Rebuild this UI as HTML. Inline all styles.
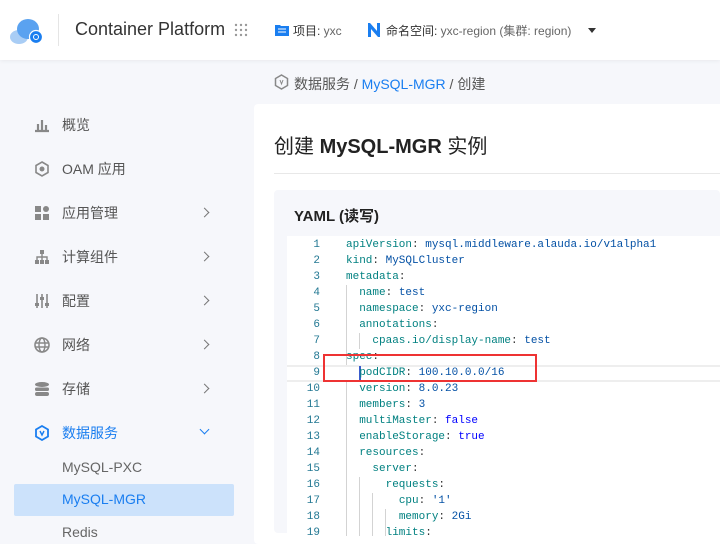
<!DOCTYPE html>
<html><head><meta charset="utf-8"><style>
*{margin:0;padding:0;box-sizing:border-box}
body{width:720px;height:533px;overflow:hidden;background:#f6f7fb;font-family:"Liberation Sans","Noto Sans CJK SC",sans-serif;position:relative;color:#333}
.hdr{position:absolute;left:0;top:0;width:720px;height:60px;background:#fff;box-shadow:0 1px 4px rgba(0,0,0,.06)}
.abs{position:absolute;white-space:nowrap}
.nav{position:absolute;left:34px;font-size:14px;color:#555;display:flex;align-items:center}
.nav svg{margin-right:12px}
.chev{position:absolute;left:201px;width:7px;height:7px;border-right:1.5px solid #777;border-top:1.5px solid #777;transform:rotate(45deg)}
.card{position:absolute;left:254px;top:104px;width:480px;height:440px;background:#fff;border-radius:4px}
.code{position:absolute;left:287px;top:236px;width:440px;height:300px;background:#fff;font-family:"Liberation Mono",monospace;font-size:11px;overflow:hidden}
.ln{position:absolute;left:0;width:33px;text-align:right;color:#237893;line-height:16px}
.tx{position:absolute;left:59px;white-space:pre;line-height:16px}
.k{color:#008080}.v{color:#0451a5}.b{color:#0000ff}
.g{position:absolute;width:1px;background:#d3d3d3}
</style></head><body>
<div class="hdr"></div>
<svg class="abs" style="left:9px;top:17px" width="36" height="28" viewBox="0 0 36 28"><ellipse cx="10" cy="20" rx="9" ry="7" fill="#a9cdf5"/><ellipse cx="19" cy="12" rx="11" ry="10" fill="#5aa2f0"/><circle cx="27" cy="20" r="6.5" fill="#1a7ef0" stroke="#fff" stroke-width="1.2"/><circle cx="27" cy="20" r="2.5" fill="none" stroke="#fff" stroke-width="1"/></svg>
<div class="abs" style="left:58px;top:14px;width:1px;height:32px;background:#e5e5e5"></div>
<div class="abs" style="left:75px;top:19px;font-size:18px;color:#333">Container Platform</div>
<svg class="abs" style="left:234px;top:23px" width="14" height="14"><g fill="#999"><circle cx="2" cy="2" r="1.2"/><circle cx="7" cy="2" r="1.2"/><circle cx="12" cy="2" r="1.2"/><circle cx="2" cy="7" r="1.2"/><circle cx="7" cy="7" r="1.2"/><circle cx="12" cy="7" r="1.2"/><circle cx="2" cy="12" r="1.2"/><circle cx="7" cy="12" r="1.2"/><circle cx="12" cy="12" r="1.2"/></g></svg>
<svg class="abs" style="left:275px;top:23px" width="14" height="13"><path d="M0 2h5l1 1h8v10H0z" fill="#1a7ef0"/><path d="M3 6h8M3 9h8" stroke="#fff"/></svg>
<div class="abs" style="left:293px;top:22px;font-size:12px;color:#333">项目: <span style="color:#666">yxc</span></div>
<svg class="abs" style="left:367px;top:23px" width="14" height="14"><path d="M1 0v14h3V6l7 8h2V0h-3v8L3 0z" fill="#1a7ef0"/></svg>
<div class="abs" style="left:386px;top:22px;font-size:12px;color:#333">命名空间: <span style="color:#666">yxc-region (集群: region)</span></div>
<div class="abs" style="left:588px;top:28px;border-left:4px solid transparent;border-right:4px solid transparent;border-top:5px solid #333"></div>

<div class="nav" style="top:115px"><svg width="16" height="16"><path d="M1 14h14M4 13V7M8 13V3M12 13V8" stroke="#888" stroke-width="2.2"/></svg>概览</div>
<div class="nav" style="top:159px"><svg width="16" height="16"><path d="M8 1l6 3.5v7L8 15l-6-3.5v-7z" fill="none" stroke="#888" stroke-width="1.6"/><circle cx="8" cy="8" r="2.5" fill="#888"/></svg>OAM 应用</div>
<div class="nav" style="top:203px"><svg width="16" height="16"><g fill="#888"><rect x="1" y="1" width="6" height="6"/><rect x="1" y="9" width="6" height="6"/><rect x="9" y="9" width="6" height="6"/><circle cx="12" cy="4" r="3"/></g></svg>应用管理</div><div class="chev" style="top:209px"></div>
<div class="nav" style="top:247px"><svg width="16" height="16"><g fill="#888"><rect x="6" y="1" width="4" height="4"/><rect x="1" y="11" width="4" height="4"/><rect x="6" y="11" width="4" height="4"/><rect x="11" y="11" width="4" height="4"/></g><path d="M8 5v6M3 11V8h10v3" stroke="#888" fill="none" stroke-width="1.4"/></svg>计算组件</div><div class="chev" style="top:253px"></div>
<div class="nav" style="top:291px"><svg width="16" height="16"><path d="M3 1v14M8 1v14M13 1v14" stroke="#888" stroke-width="1.6"/><rect x="1" y="10" width="4" height="3" fill="#888"/><rect x="6" y="4" width="4" height="3" fill="#888"/><rect x="11" y="10" width="4" height="3" fill="#888"/></svg>配置</div><div class="chev" style="top:297px"></div>
<div class="nav" style="top:335px"><svg width="16" height="16"><circle cx="8" cy="8" r="7" fill="none" stroke="#888" stroke-width="1.6"/><ellipse cx="8" cy="8" rx="3" ry="7" fill="none" stroke="#888" stroke-width="1.4"/><path d="M1 6h14M1 10h14" stroke="#888" stroke-width="1.4"/></svg>网络</div><div class="chev" style="top:341px"></div>
<div class="nav" style="top:379px"><svg width="16" height="16"><g fill="#888"><ellipse cx="8" cy="3.5" rx="7" ry="2.5"/><rect x="1" y="6.5" width="14" height="3.5" rx="1.5"/><rect x="1" y="11" width="14" height="4" rx="2"/></g></svg>存储</div><div class="chev" style="top:385px"></div>
<div class="nav" style="top:423px;color:#1a7ef0"><svg width="16" height="16"><path d="M8 1l6 3.5v7L8 15l-6-3.5v-7z" fill="none" stroke="#1a7ef0" stroke-width="1.8"/><path d="M6 6l2 4 2-4" stroke="#1a7ef0" fill="none" stroke-width="1.4"/></svg>数据服务</div>
<div class="abs" style="left:201px;top:426px;width:7px;height:7px;border-right:1.5px solid #1a7ef0;border-bottom:1.5px solid #1a7ef0;transform:rotate(45deg)"></div>
<div class="abs" style="left:62px;top:459px;font-size:14px;color:#666">MySQL-PXC</div>
<div class="abs" style="left:14px;top:484px;width:220px;height:32px;background:#cce2fb;border-radius:2px"></div>
<div class="abs" style="left:62px;top:491px;font-size:14px;color:#1a7ef0">MySQL-MGR</div>
<div class="abs" style="left:62px;top:524px;font-size:14px;color:#666">Redis</div>

<svg class="abs" style="left:274px;top:74px" width="15" height="16"><path d="M7.5 1l6 3.5v7l-6 3.5-6-3.5v-7z" fill="none" stroke="#888" stroke-width="1.5"/><path d="M6 6l1.5 4 1.5-4" stroke="#888" fill="none"/></svg>
<div class="abs" style="left:294px;top:74px;font-size:14px;color:#555">数据服务 / <span style="color:#1a7ef0">MySQL-MGR</span> / 创建</div>
<div class="card"></div>
<div class="abs" style="left:274px;top:130px;font-size:20px;color:#222">创建 <span style="font-weight:600">MySQL-MGR</span> 实例</div>
<div class="abs" style="left:274px;top:173px;width:446px;height:1px;background:#e8e8e8"></div>
<div class="abs" style="left:274px;top:190px;width:446px;height:343px;background:#f6f7fb;border-radius:4px"></div>
<div class="abs" style="left:294px;top:205px;font-size:15px;font-weight:bold;color:#222">YAML (读写)</div>
<div class="code">
<div class="abs" style="left:0;top:129px;width:440px;height:17px;border-top:2px solid #eee;border-bottom:2px solid #eee"></div>
<div class="g" style="left:59px;top:49px;height:80px"></div>
<div class="g" style="left:59px;top:145px;height:160px"></div>
<div class="g" style="left:72px;top:97px;height:16px"></div>
<div class="g" style="left:72px;top:241px;height:64px"></div>
<div class="g" style="left:85px;top:257px;height:48px"></div>
<div class="g" style="left:98px;top:273px;height:32px"></div>
<div class="abs" style="left:72px;top:130px;width:2px;height:14px;background:#3a5ccc"></div>
<div class="ln" style="top:1px">1<br>2<br>3<br>4<br>5<br>6<br>7<br>8<br>9<br>10<br>11<br>12<br>13<br>14<br>15<br>16<br>17<br>18<br>19</div>
<div class="tx" style="top:1px"><span class="k">apiVersion</span>: <span class="v">mysql.middleware.alauda.io/v1alpha1</span>
<span class="k">kind</span>: <span class="v">MySQLCluster</span>
<span class="k">metadata</span>:
  <span class="k">name</span>: <span class="v">test</span>
  <span class="k">namespace</span>: <span class="v">yxc-region</span>
  <span class="k">annotations</span>:
    <span class="k">cpaas.io/display-name</span>: <span class="v">test</span>
<span class="k">spec</span>:
  <span class="k">podCIDR</span>: <span class="v">100.10.0.0/16</span>
  <span class="k">version</span>: <span class="v">8.0.23</span>
  <span class="k">members</span>: <span class="v">3</span>
  <span class="k">multiMaster</span>: <span class="b">false</span>
  <span class="k">enableStorage</span>: <span class="b">true</span>
  <span class="k">resources</span>:
    <span class="k">server</span>:
      <span class="k">requests</span>:
        <span class="k">cpu</span>: <span class="v">'1'</span>
        <span class="k">memory</span>: <span class="v">2Gi</span>
      <span class="k">limits</span>:</div>
</div>
<div class="abs" style="left:323px;top:354px;width:214px;height:28px;border:2px solid #ee3333"></div>
</body></html>
